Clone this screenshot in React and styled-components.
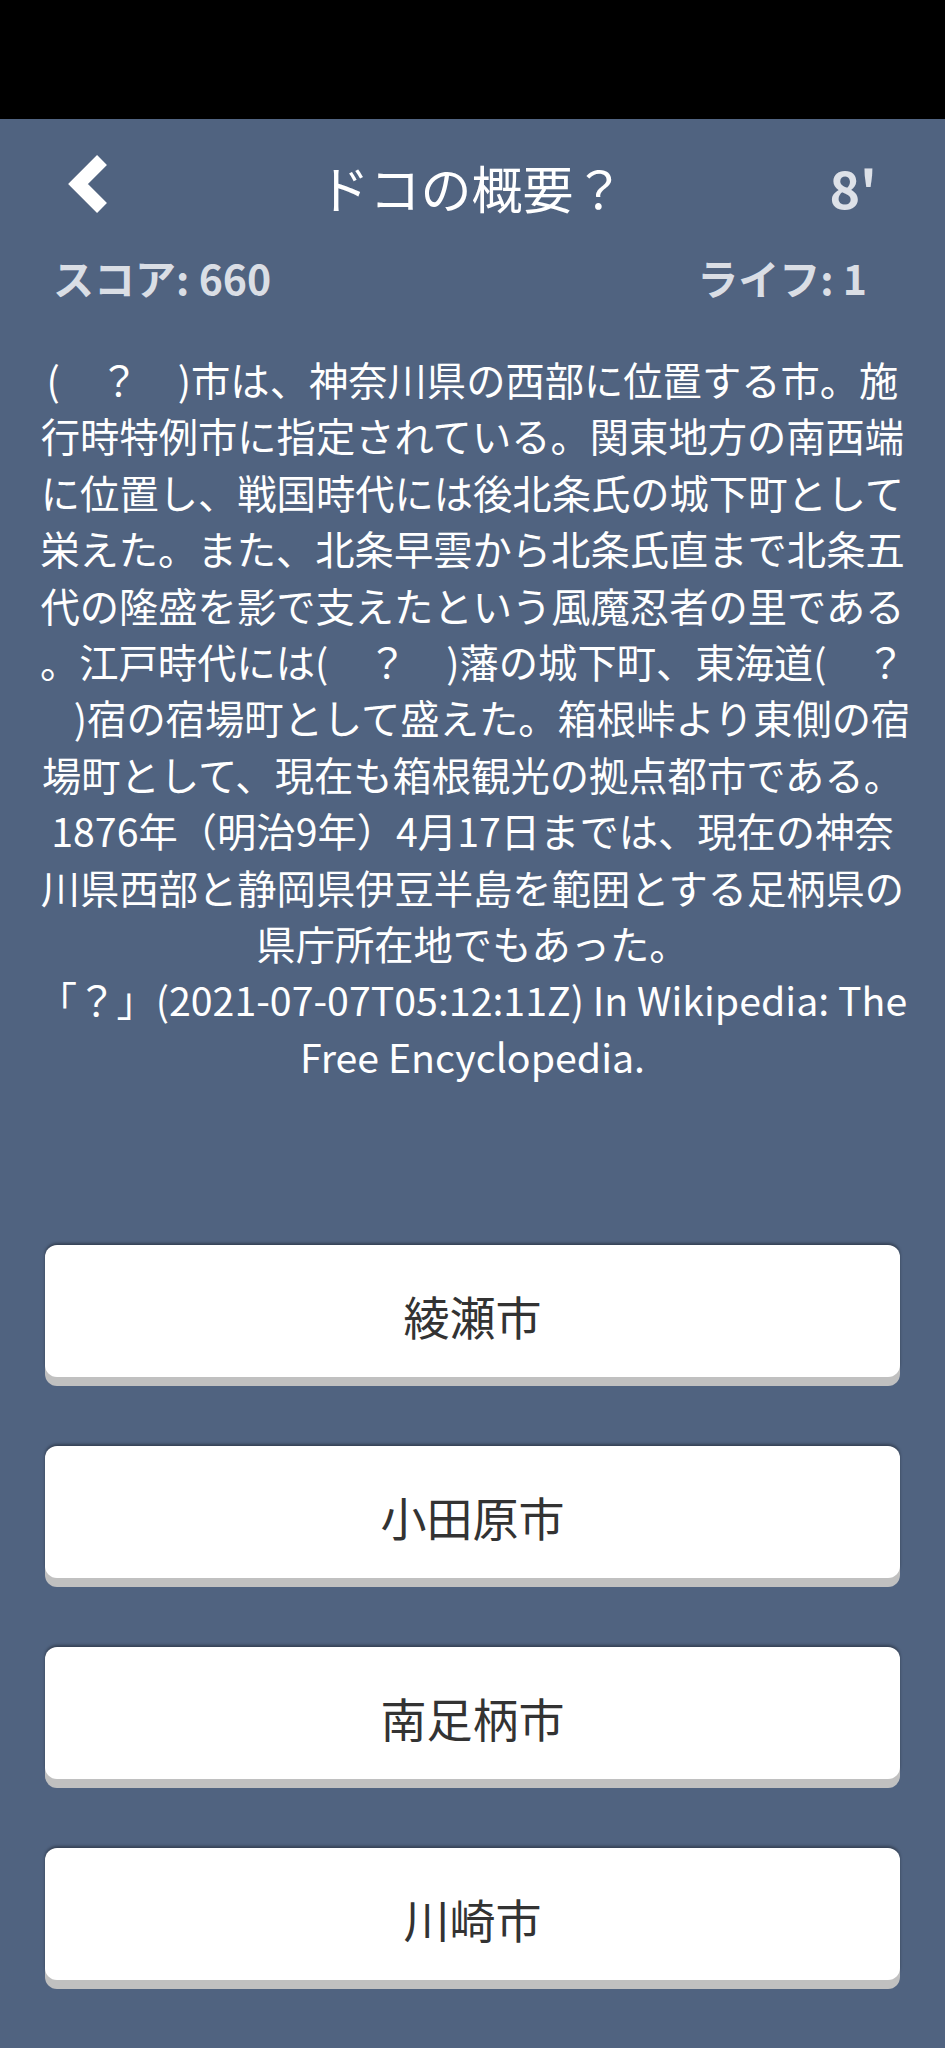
import React from "react";
import styled, { createGlobalStyle } from "styled-components";

const GlobalStyle = createGlobalStyle`
  html, body {
    margin: 0;
    padding: 0;
    background: #506380;
  }
  body {
    font-family: "Noto Sans CJK JP", "Noto Sans", sans-serif;
    -webkit-font-smoothing: antialiased;
  }
  * { box-sizing: border-box; }
`;

const Screen = styled.div`
  width: 945px;
  min-height: 2048px;
  background: #506380;
  display: flex;
  flex-direction: column;
`;

const StatusBar = styled.div`
  height: 119px;
  background: #000;
  flex-shrink: 0;
`;

const Header = styled.header`
  height: 136px;
  padding: 0 68px 0 66px;
  display: grid;
  grid-template-columns: 1fr auto 1fr;
  align-items: center;
`;

const BackButton = styled.button`
  justify-self: start;
  background: none;
  border: none;
  padding: 0;
  margin: 0 0 6px 0;
  width: 44px;
  height: 60px;
  display: flex;
  cursor: pointer;
`;

const Title = styled.h1`
  margin: 0;
  font-size: 51px;
  line-height: 1;
  font-weight: 400;
  color: #ffffff;
  white-space: nowrap;
`;

const Timer = styled.div`
  justify-self: end;
  font-size: 52px;
  line-height: 1;
  font-weight: 700;
  color: #dde1e8;
`;

const StatsRow = styled.div`
  height: 44px;
  padding: 0 78px 0 53px;
  display: flex;
  justify-content: space-between;
  align-items: center;
`;

const Stat = styled.span`
  font-size: 41px;
  line-height: 1;
  font-weight: 700;
  color: #dadee5;
  white-space: pre;
`;

const Description = styled.div`
  margin-top: 52px;
  padding: 0 16px;
  text-align: center;
  color: #ffffff;
  font-size: 39.3px;
  line-height: 56.4px;
`;

const Line = styled.div`
  white-space: pre;
`;

const Choices = styled.div`
  margin-top: 161px;
  padding: 0 45px;
  display: flex;
  flex-direction: column;
  gap: 69px;
`;

const Choice = styled.button`
  height: 132px;
  width: 100%;
  border: none;
  border-radius: 12px;
  background: #ffffff;
  box-shadow: 0 9px 0 #c0c0c0, 0 -2px 3px rgba(0, 0, 0, 0.35);
  display: flex;
  align-items: center;
  justify-content: center;
  padding: 8px 0 0 0;
  font-family: "Noto Sans CJK JP", "Noto Sans", sans-serif;
  font-size: 46px;
  line-height: 1;
  font-weight: 400;
  color: #333333;
  cursor: pointer;
`;

const ChevronLeft = () => (
  <svg width="44" height="60" viewBox="0 0 44 60" aria-hidden="true">
    <path
      d="M36 6 L12 30 L36 54"
      fill="none"
      stroke="#ffffff"
      strokeWidth="14"
      strokeLinecap="butt"
      strokeLinejoin="miter"
    />
  </svg>
);

const lines = [
  "(　？　)市は、神奈川県の西部に位置する市。施",
  "行時特例市に指定されている。関東地方の南西端",
  "に位置し、戦国時代には後北条氏の城下町として",
  "栄えた。また、北条早雲から北条氏直まで北条五",
  "代の隆盛を影で支えたという風魔忍者の里である",
  "。江戸時代には(　？　)藩の城下町、東海道(　？",
  "　)宿の宿場町として盛えた。箱根峠より東側の宿",
  "場町として、現在も箱根観光の拠点都市である。",
  "1876年（明治9年）4月17日までは、現在の神奈",
  "川県西部と静岡県伊豆半島を範囲とする足柄県の",
  "県庁所在地でもあった。",
  "「？」(2021-07-07T05:12:11Z) In Wikipedia: The",
  "Free Encyclopedia.",
];

const options = ["綾瀬市", "小田原市", "南足柄市", "川崎市"];

export default function App() {
  return (
    <>
      <GlobalStyle />
      <Screen>
        <StatusBar />
        <Header>
          <BackButton aria-label="戻る">
            <ChevronLeft />
          </BackButton>
          <Title>ドコの概要？</Title>
          <Timer>8'</Timer>
        </Header>
        <StatsRow>
          <Stat>スコア: 660</Stat>
          <Stat>ライフ: 1</Stat>
        </StatsRow>
        <Description>
          {lines.map((l, i) => (
            <Line key={i}>{l}</Line>
          ))}
        </Description>
        <Choices>
          {options.map((o) => (
            <Choice key={o}>{o}</Choice>
          ))}
        </Choices>
      </Screen>
    </>
  );
}
